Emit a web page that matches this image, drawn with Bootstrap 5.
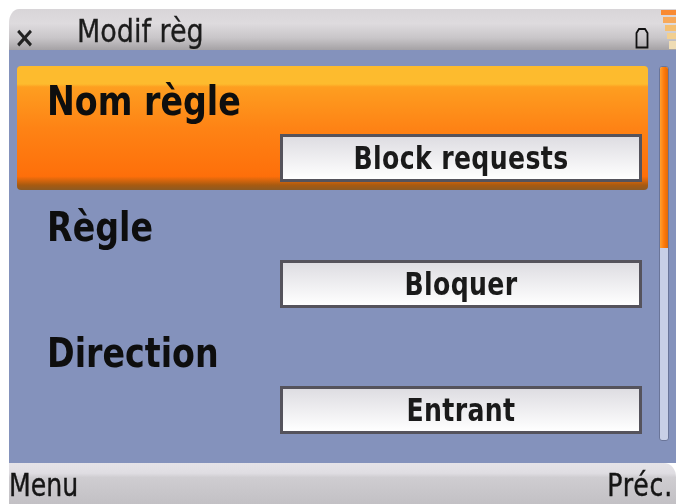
<!DOCTYPE html>
<html lang="fr"><head><meta charset="utf-8"><title>Modif règ</title>
<link href="https://cdn.jsdelivr.net/npm/bootstrap@5.3.0/dist/css/bootstrap.min.css" rel="stylesheet">
<style>
html,body{margin:0;height:504px;overflow:hidden;background:#fff}
body{padding:9px 0 0 9px;font-family:"DejaVu Sans","Noto Sans",sans-serif;font-stretch:condensed;color:#111}
.phone{height:495px;width:667px;filter:blur(.45px)}
.topbar{height:41px;background:linear-gradient(#d8d5d8 0,#dedbde 35%,#c9c6c9 70%,#a5a2a5 100%);border-top-left-radius:10px 14px}
.closex{width:36px;font-size:28px;line-height:1;font-weight:700;padding-left:5px;padding-top:15px;color:#222}
.ttl{font-size:30px;line-height:34px;margin-left:32px;color:#1c1c1c;padding-top:6px;transform:scaleY(1.06);transform-origin:0 100%;-webkit-text-stroke:.3px #1c1c1c}
.batt{margin-top:18px;margin-right:10px}
.sig{width:18px;height:41px;margin-right:-1px}
.mainarea{height:413px;background:#8492bc;padding:16px 0 0 8px}
.rowlist{width:631px}
.itemrow{height:124px;margin-bottom:2px;padding:0 6px 8px 30px;font-weight:700}
.itemrow.sel{background:linear-gradient(#fdbb2e 0,#fdbb2e 18px,#fe9e20 21px,#fe8315 50%,#fe6f0a 89%,#a85a10 96%,#8c5a24 100%);border-radius:4px}
.lbl{font-size:37px;line-height:44px;padding-top:15px;margin-bottom:-2px;transform:scaleY(1.1);transform-origin:0 75%;color:#0e0e0e}
.fld{width:362px;height:48px;margin-left:auto;margin-top:11px;border:3px solid #55535c;background:linear-gradient(#dedde2,#fff);text-align:center;font-size:28px;line-height:43px;font-weight:700;color:#1a1a1a;letter-spacing:.35px}
.fldtxt{display:inline-block;transform:scaleY(1.12)}
.scrtrack{width:10px;height:375px;margin-left:11px;background:#c8cfe6;border:1px solid #6a7599;border-radius:3px;overflow:hidden}
.scrthumb{height:181px;background:linear-gradient(90deg,#ffa030,#ff7a0a 50%,#e06a08)}
.botbar{height:41px;background:linear-gradient(#e5e3e8 0,#dfdde2 25%,#cfcdd1 35%,#c2c0c4 100%);font-size:28px;line-height:32px;padding:7px 3px 0 0;color:#151515;border-top-right-radius:12px 14px;-webkit-text-stroke:.35px #151515}
.softk{display:inline-block;transform:scaleY(1.14);transform-origin:0 60%}
.softk.rgt{letter-spacing:.8px}
</style></head>
<body>
<div class="phone d-flex flex-column">
 <div class="topbar d-flex align-items-start flex-shrink-0">
  <div class="closex">×</div>
  <div class="ttl">Modif règ</div>
  <svg class="batt ms-auto" width="14" height="22" viewBox="0 0 14 22"><path d="M1.5 20.5V6L4 2H10L12.5 6V20.5Z" fill="none" stroke="#111" stroke-width="1.8"/></svg>
  <svg class="sig" viewBox="0 0 18 41"><rect x="2" y="1" width="16" height="5" fill="#f98a32"/><rect x="4" y="8" width="14" height="6" fill="#f7a95a"/><rect x="6" y="16" width="12" height="6" fill="#f5bf70"/><rect x="8" y="24" width="10" height="6" fill="#f2cf90"/><rect x="10" y="32" width="8" height="8" fill="#efdcb4"/></svg>
 </div>
 <div class="mainarea d-flex align-items-start">
  <div class="rowlist">
   <div class="itemrow sel"><div class="lbl">Nom règle</div><div class="fld"><span class="fldtxt">Block requests</span></div></div>
   <div class="itemrow"><div class="lbl">Règle</div><div class="fld"><span class="fldtxt">Bloquer</span></div></div>
   <div class="itemrow"><div class="lbl">Direction</div><div class="fld"><span class="fldtxt">Entrant</span></div></div>
  </div>
  <div class="scrtrack flex-shrink-0"><div class="scrthumb"></div></div>
 </div>
 <div class="botbar d-flex justify-content-between flex-shrink-0"><span class="softk">Menu</span><span class="softk rgt">Préc.</span></div>
</div>
<script src="https://cdn.jsdelivr.net/npm/bootstrap@5.3.0/dist/js/bootstrap.bundle.min.js"></script>
</body></html>
